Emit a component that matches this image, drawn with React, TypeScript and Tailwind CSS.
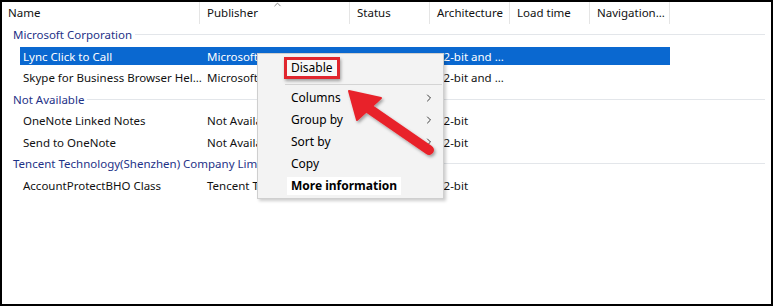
import { ChevronRight, ChevronUp } from "lucide-react";

const font = { fontFamily: '"Noto Sans", "Segoe UI", sans-serif' };

const columns = [
  { label: "Name", width: "w-[198px] pl-[6px]" },
  { label: "Publisher", width: "w-[150px] pl-[7px]" },
  { label: "Status", width: "w-[80px] pl-[7px]" },
  { label: "Architecture", width: "w-[80px] pl-[7px]" },
  { label: "Load time", width: "w-[80px] pl-[7px]" },
  { label: "Navigation...", width: "w-[80px] pl-[7px]" },
];

type Row =
  | { kind: "group"; label: string }
  | { kind: "item"; name: string; publisher: string; status: string; arch: string; selected?: boolean };

const rows: Row[] = [
  { kind: "group", label: "Microsoft Corporation" },
  { kind: "item", name: "Lync Click to Call", publisher: "Microsoft Corporation", status: "Enabled", arch: "32-bit and ...", selected: true },
  { kind: "item", name: "Skype for Business Browser Hel...", publisher: "Microsoft Corporation", status: "Enabled", arch: "32-bit and ..." },
  { kind: "group", label: "Not Available" },
  { kind: "item", name: "OneNote Linked Notes", publisher: "Not Available", status: "Enabled", arch: "32-bit" },
  { kind: "item", name: "Send to OneNote", publisher: "Not Available", status: "Enabled", arch: "32-bit" },
  { kind: "group", label: "Tencent Technology(Shenzhen) Company Limited" },
  { kind: "item", name: "AccountProtectBHO Class", publisher: "Tencent Technology", status: "Enabled", arch: "32-bit" },
];

function MenuItem({ label, sub, bold }: { label: string; sub?: boolean; bold?: boolean }) {
  return (
    <div className="flex h-[22px] items-center pl-[33px] pr-[8px]">
      <span className={bold ? "-ml-[4px] bg-white px-[4px] font-bold" : ""}>{label}</span>
      {sub && <ChevronRight className="ml-auto size-[12px] text-[#222]" strokeWidth={1.75} />}
    </div>
  );
}

export default function App() {
  return (
    <div
      className="relative h-[306px] w-[773px] overflow-hidden border-2 border-black bg-white text-[11.5px] text-[#111]"
      style={font}
    >
      {/* header */}
      <div className="relative flex h-[22px] items-center">
        {columns.map((c) => (
          <div key={c.label} className={`${c.width} flex h-full items-center border-r border-[#e5e5e5]`}>
            {c.label}
          </div>
        ))}
        <ChevronUp className="absolute left-[270px] top-[-3px] size-[11px] text-[#555]" strokeWidth={1.5} />
      </div>

      {/* rows */}
      <div className="flex flex-col">
        {rows.map((r, i) =>
          r.kind === "group" ? (
            <div key={i} className="flex h-[21.5px] items-center pl-[11px] pr-[6px] text-[#1e3287]">
              <span className="mr-[3px] whitespace-nowrap">{r.label}</span>
              <div className="h-px flex-1 bg-[#e3e6ea]" />
            </div>
          ) : (
            <div key={i} className="flex h-[21.5px] items-center pl-[18px]">
              <div
                className={`flex h-[18px] w-[650px] items-center ${r.selected ? "bg-[#0a68d0] text-white" : ""}`}
              >
                <div className="w-[180px] whitespace-nowrap pl-[3px]">{r.name}</div>
                <div className="w-[150px] overflow-hidden whitespace-nowrap pl-[7px]">{r.publisher}</div>
                <div className="w-[80px] overflow-hidden whitespace-nowrap pl-[7px]">{r.status}</div>
                <div className="w-[80px] overflow-hidden whitespace-nowrap pl-[7px]">{r.arch}</div>
                <div className="w-[80px] pl-[7px]" />
                <div className="w-[80px] pl-[7px]" />
              </div>
            </div>
          ),
        )}
      </div>

      {/* context menu */}
      <div className="absolute left-[255px] top-[51px] h-[146px] w-[187px] border border-[#cfcfcf] bg-[#f3f3f3] pt-[3px] text-[12px] text-black shadow-[2px_2px_3px_rgba(0,0,0,0.2)]">
        <div className="flex h-[22px] items-center pl-[26px]">
          <span className="flex h-[22px] items-center border-[3px] border-[#e0262e] bg-[#f7f7f7] px-[4px] shadow-[1px_2px_3px_rgba(0,0,0,0.35)]">
            Disable
          </span>
        </div>
        <div className="mb-[2px] ml-[27px] mr-[1px] mt-[5px] h-px bg-[#d4d4d4]" />
        <MenuItem label="Columns" sub />
        <MenuItem label="Group by" sub />
        <MenuItem label="Sort by" sub />
        <MenuItem label="Copy" />
        <MenuItem label="More information" bold />
      </div>

      {/* annotation arrow */}
      <svg className="absolute left-0 top-0" width="773" height="306" viewBox="-2 -2 773 306">
        <defs>
          <filter id="sh" x="-20%" y="-20%" width="140%" height="140%">
            <feDropShadow dx="1.5" dy="2" stdDeviation="1.5" floodColor="#000" floodOpacity="0.35" />
          </filter>
        </defs>
        <g filter="url(#sh)" fill="#e8222a" stroke="#e8222a">
          <line x1="364" y1="104" x2="425" y2="146" strokeWidth="10" strokeLinecap="round" />
          <polygon points="345,87 377,94 353,116" strokeWidth="2" strokeLinejoin="round" />
        </g>
      </svg>
    </div>
  );
}
